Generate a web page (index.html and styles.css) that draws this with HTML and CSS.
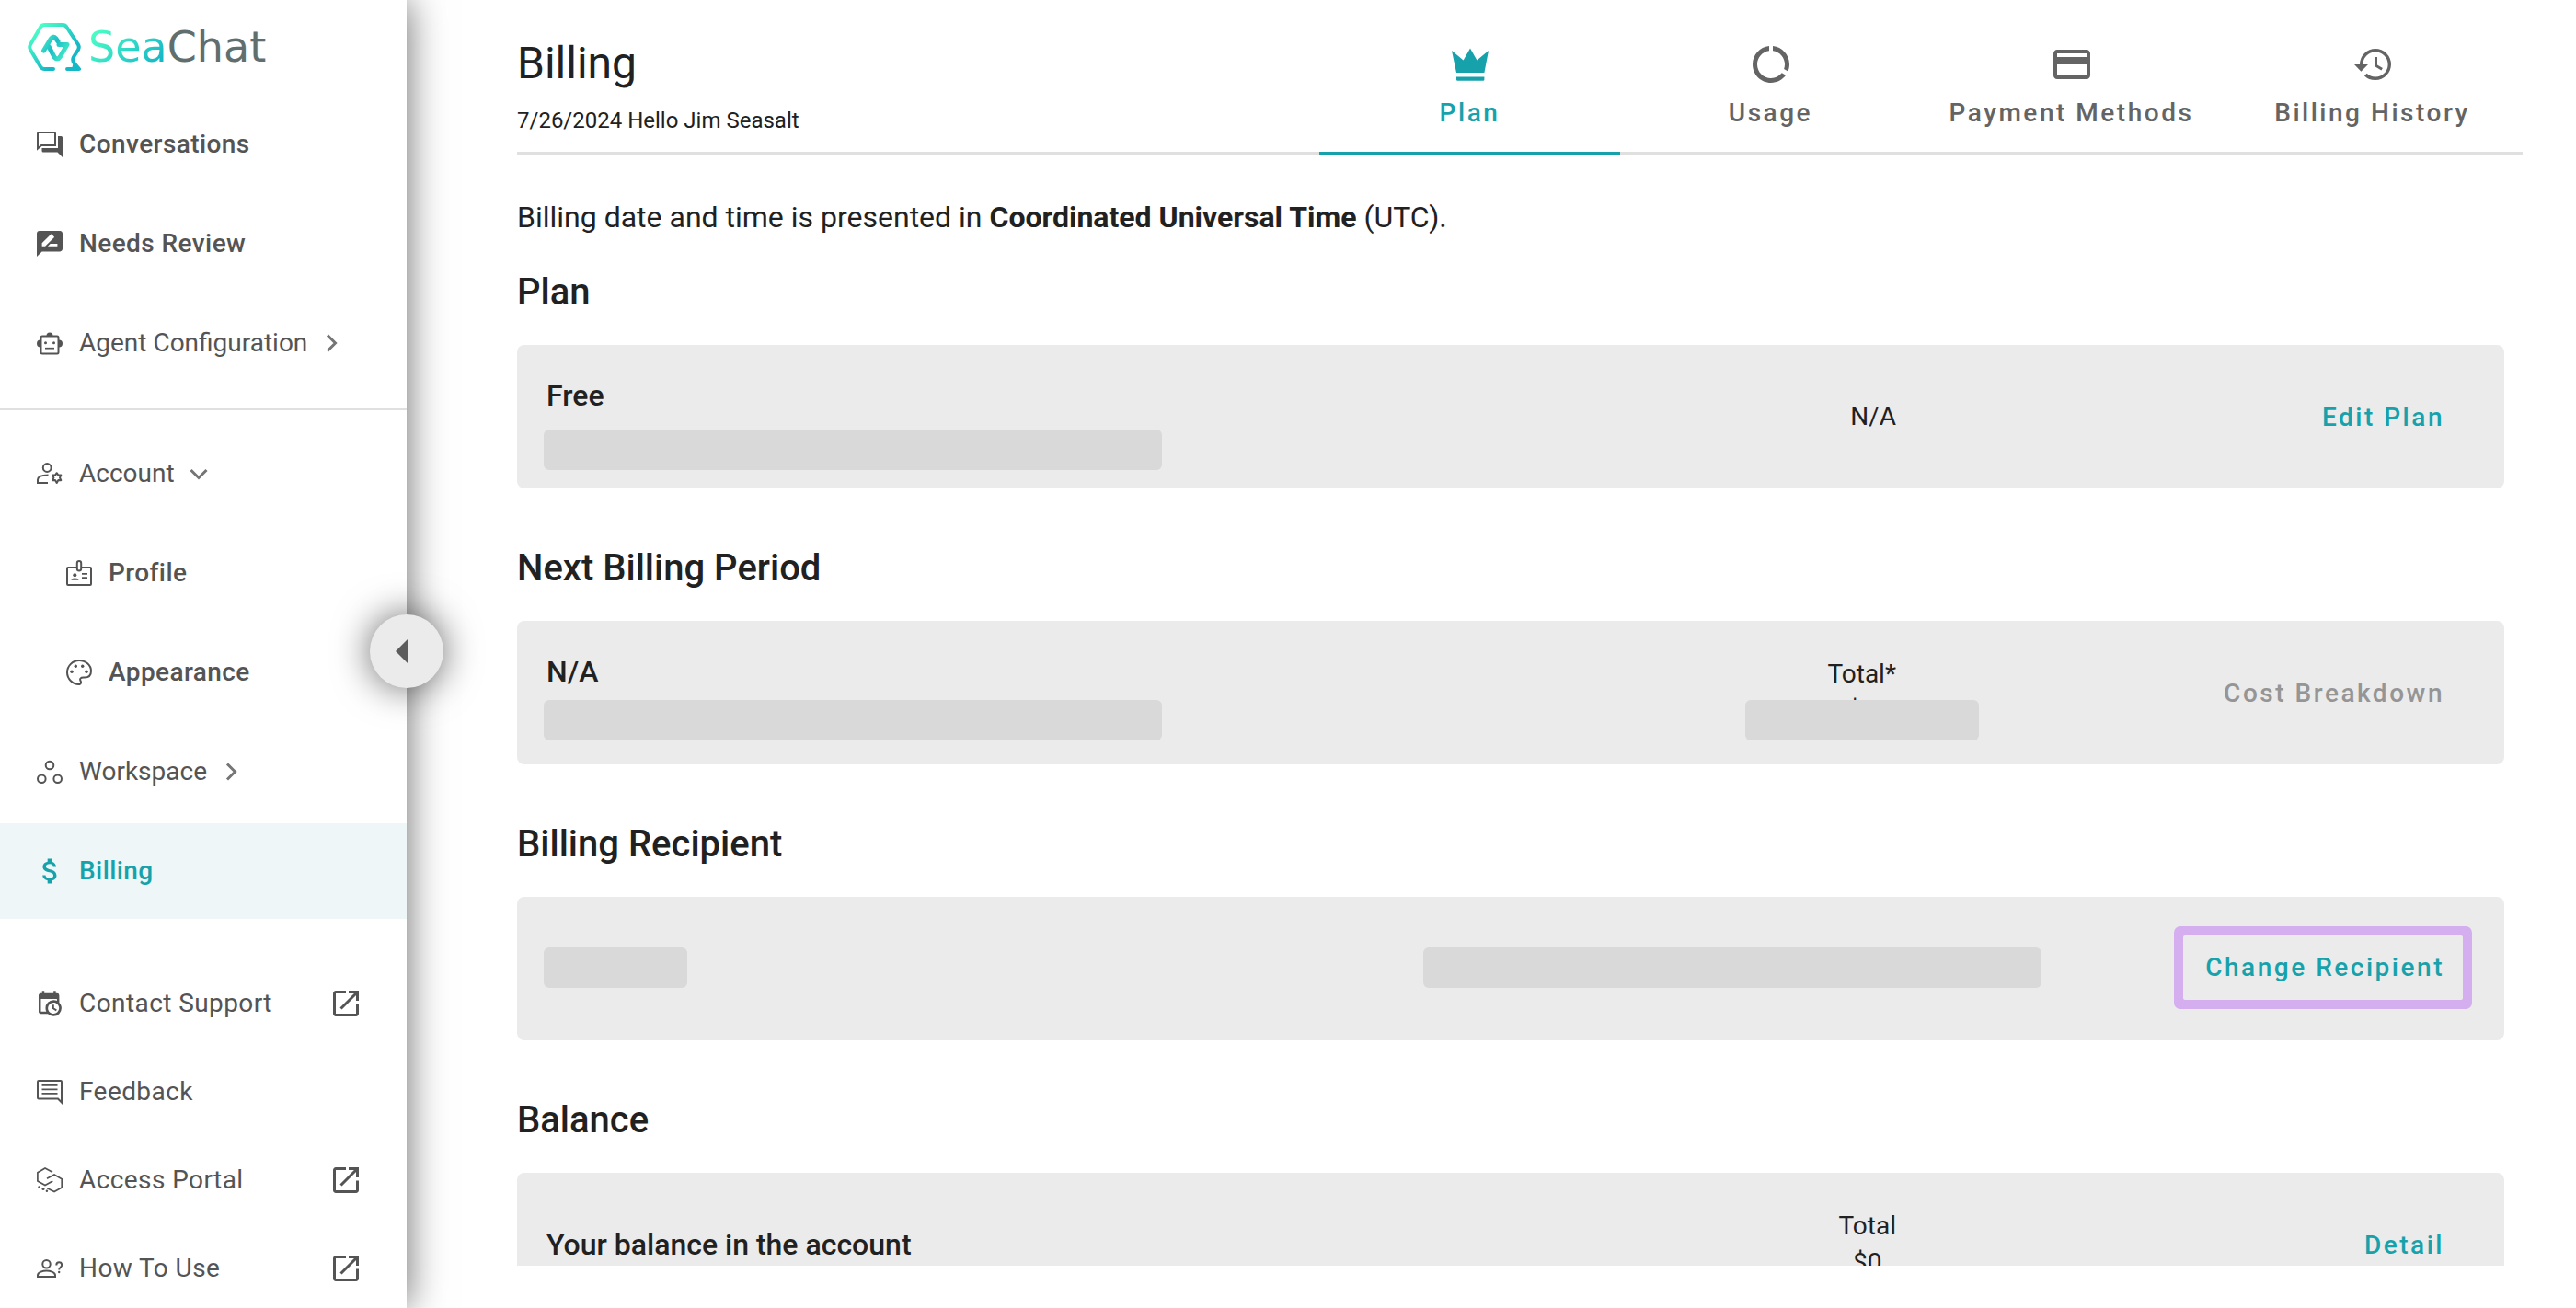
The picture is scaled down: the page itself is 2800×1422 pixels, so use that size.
FILE: index.html
```html
<!DOCTYPE html>
<html lang="en">
<head>
<meta charset="utf-8">
<title>Billing - SeaChat</title>
<meta name="viewport" content="width=device-width, initial-scale=1">
<link rel="stylesheet" href="styles.css">
</head>
<body>
<div class="app">
  <aside class="sidebar">
    <a class="logo" href="#">
      <svg class="logo-mark" viewBox="0 0 58 54" aria-hidden="true">
        <defs>
          <linearGradient id="markRing" x1="0" y1="0" x2="1" y2="1">
            <stop offset="0.1" stop-color="#4dffc6"/><stop offset="0.7" stop-color="#17b8c6"/>
          </linearGradient>
          <linearGradient id="markWave" x1="0" y1="0" x2="1" y2="0.6">
            <stop offset="0" stop-color="#43ecc6"/><stop offset="0.5" stop-color="#1bbcc6"/><stop offset="1" stop-color="#40e6c6"/>
          </linearGradient>
        </defs>
        <path d="M28 51H18.500Q15.500 51 14 48.500L3 30Q1.500 27 3 24.500L14 5.500Q15.500 3 18.500 3H38Q41 3 42.500 5.500L55 24.500Q56.500 27 55 30L50 38Q48 42 51 45L56 51H43" fill="none" stroke="url(#markRing)" stroke-width="4" stroke-linecap="round" stroke-linejoin="round"/>
        <path d="M48 51l2-8 7 9z" fill="#17b8c6"/>
        <path d="M17.500 31L25 18.500Q28 14.500 30.500 17.500L33 21M23 26.500L29 38Q32.500 42 35.500 37.500L43 24.500H34" fill="none" stroke="url(#markWave)" stroke-width="5" stroke-linecap="round" stroke-linejoin="round"/>
      </svg>
      <span class="logo-text"><span class="logo-sea">Sea</span>Chat</span>
    </a>

    <nav class="nav">
      <a class="nav-item nav-item--strong" href="#">
        <svg class="nav-icon" viewBox="0 0 28 28" aria-hidden="true"><path d="M2 1H19a1 1 0 0 1 1 1V15H5L1 18.600V2a1 1 0 0 1 1-1z" fill="none" stroke="currentColor" stroke-width="2"/><path d="M23 5h3.500a1.500 1.500 0 0 1 1.500 1.500V28L22.500 22.500H7a1.500 1.500 0 0 1-1.500-1.500V18H23z" fill="currentColor"/></svg>
        Conversations
      </a>
      <a class="nav-item nav-item--strong" href="#">
        <svg class="nav-icon" viewBox="2 2 20 20" aria-hidden="true"><path fill="currentColor" d="M20 2H4c-1.100 0-1.990.9-1.990 2L2 22l4-4h14c1.100 0 2-.9 2-2V4c0-1.100-.9-2-2-2zM6 14v-2.470l6.880-6.880c.2-.2.510-.2.710 0l1.770 1.770c.2.2.2.510 0 .710L8.470 14H6zm12 0h-7.500l2-2H18v2z"/></svg>
        Needs Review
      </a>
      <button class="nav-item" type="button" aria-expanded="false">
        <svg class="nav-icon" viewBox="0 0 28 28" aria-hidden="true"><rect x="4.500" y="6.500" width="19" height="19" rx="1.500" fill="none" stroke="currentColor" stroke-width="2"/><path fill="currentColor" d="M10.500 6q0-3.500 3.500-3.500T17.500 6zM4 10.500v8q-4 0-4-4t4-4zM24 10.500v8q4 0 4-4t-4-4z"/><circle cx="9.500" cy="13.700" r="1.500" fill="currentColor"/><circle cx="18.500" cy="13.700" r="1.500" fill="currentColor"/><path d="M9 19.700h10" stroke="currentColor" stroke-width="1.700"/></svg>
        Agent Configuration
        <svg class="chevron" viewBox="0 0 20 20" aria-hidden="true"><path d="M6 1.500L14.500 10 6 18.500"/></svg>
      </button>
      <hr class="nav-divider">
      <button class="nav-item" type="button" aria-expanded="true">
        <svg class="nav-icon" viewBox="0 0 28 28" aria-hidden="true"><g fill="none" stroke="currentColor" stroke-width="2"><circle cx="11.200" cy="7.500" r="4.400"/><path d="M12.500 15.500C6 15.500 1 17 1 20.500V24H12"/><path stroke-linejoin="round" d="M21.700 13.200l1.700 2.400 2.900-.2-1.300 2.900 1.300 2.900-2.900-.2-1.700 2.900-1.700-2.900-2.900.2 1.300-2.900-1.300-2.900 2.900.2z"/></g></svg>
        Account
        <svg class="chevron" viewBox="0 0 20 20" aria-hidden="true"><path d="M1.500 6L10 14.500 18.500 6"/></svg>
      </button>
      <a class="nav-item nav-item--strong nav-item--child" href="#">
        <svg class="nav-icon" viewBox="0 0 28 28" aria-hidden="true"><g fill="none" stroke="currentColor" stroke-width="2"><path d="M11 8H2a1 1 0 0 0-1 1V26a1 1 0 0 0 1 1H26a1 1 0 0 0 1-1V9a1 1 0 0 0-1-1H17"/><rect x="11.800" y="1" width="4.400" height="10.500" rx="2.200"/><path stroke-width="1.700" d="M17 14.800h6M17 19.200h6"/></g><circle cx="9.300" cy="16.300" r="2" fill="currentColor"/><path d="M5.500 21.800q0-2.300 3.800-2.300t4.200 2.300z" fill="currentColor"/></svg>
        Profile
      </a>
      <a class="nav-item nav-item--strong nav-item--child" href="#">
        <svg class="nav-icon" viewBox="0 0 28 28" aria-hidden="true"><path d="M14.500 27C7 27.200 1 21 1 14S7 1 14 1s13 5 13 11.500c0 5-3 7-7 7h-1.500c-3 0-4 1.500-3 3.500.8 1.500.9 3.500-1 4z" fill="none" stroke="currentColor" stroke-width="2"/><g fill="currentColor"><circle cx="10.300" cy="7.300" r="1.700"/><circle cx="17.700" cy="7.300" r="1.700"/><circle cx="6" cy="13.300" r="1.700"/><circle cx="22" cy="13.300" r="1.700"/></g></svg>
        Appearance
      </a>
      <button class="nav-item" type="button" aria-expanded="false">
        <svg class="nav-icon" viewBox="0 0 28 28" aria-hidden="true"><g fill="none" stroke="currentColor" stroke-width="2"><circle cx="14" cy="7" r="4.300"/><circle cx="5.300" cy="21.700" r="4.300"/><circle cx="22.700" cy="21.700" r="4.300"/></g></svg>
        Workspace
        <svg class="chevron" viewBox="0 0 20 20" aria-hidden="true"><path d="M6 1.500L14.500 10 6 18.500"/></svg>
      </button>
      <a class="nav-item nav-item--strong nav-item--active" href="#" aria-current="page">
        <svg class="nav-icon" viewBox="2.200 2.670 18.670 18.670" aria-hidden="true"><path fill="currentColor" d="M11.800 10.900c-2.270-.590-3-1.200-3-2.150 0-1.090 1.010-1.850 2.700-1.850 1.780 0 2.440.850 2.500 2.100h2.210c-.070-1.720-1.120-3.300-3.210-3.810V3h-3v2.160c-1.940.420-3.500 1.680-3.500 3.610 0 2.310 1.910 3.460 4.700 4.130 2.500.6 3 1.480 3 2.410 0 .690-.490 1.790-2.700 1.790-2.060 0-2.870-.920-2.980-2.100h-2.200c.120 2.190 1.760 3.420 3.680 3.830V21h3v-2.150c1.950-.370 3.500-1.500 3.500-3.550 0-2.840-2.430-3.810-4.700-4.400z"/></svg>
        Billing
      </a>
    </nav>

    <nav class="nav nav--support">
      <a class="nav-item nav-item--support" href="#">
        <svg class="nav-icon" viewBox="1.400 0.750 22.500 22.500" aria-hidden="true"><path fill="currentColor" d="M15,13H16.500V15.820L18.940,17.230L18.190,18.530L15,16.690V13M19,8H5V19H9.670C9.240,18.090 9,17.070 9,16A7,7 0 0,1 16,9C17.070,9 18.090,9.240 19,9.670V8M5,21C3.890,21 3,20.100 3,19V5C3,3.890 3.890,3 5,3H6V1H8V3H16V1H18V3H19A2,2 0 0,1 21,5V11.100C22.240,12.360 23,14.090 23,16A7,7 0 0,1 16,23C14.090,23 12.360,22.240 11.100,21H5M16,11.150A4.850,4.850 0 0,0 11.150,16C11.150,18.680 13.320,20.850 16,20.850A4.850,4.850 0 0,0 20.850,16C20.850,13.320 18.680,11.150 16,11.150Z"/></svg>
        Contact Support
        <svg class="external" viewBox="0 0 28 28" aria-hidden="true"><path d="M14 1.500H3A1.500 1.500 0 0 0 1.500 3V25A1.500 1.500 0 0 0 3 26.500H25A1.500 1.500 0 0 0 26.500 25V14.500M17 1.500H26.500V11M26.500 1.500L8.500 19.500"/></svg>
      </a>
      <a class="nav-item nav-item--support" href="#">
        <svg class="nav-icon" viewBox="0 0 28 28" aria-hidden="true"><g fill="none" stroke="currentColor"><path stroke-width="2" d="M2 2H26a1 1 0 0 1 1 1V25.500L23 21.500H2a1 1 0 0 1-1-1V3a1 1 0 0 1 1-1z"/><path stroke-width="1.800" d="M5.500 6.800h17M5.500 11.300h17M5.500 15.800h17"/></g></svg>
        Feedback
      </a>
      <a class="nav-item nav-item--support" href="#">
        <svg class="nav-icon" viewBox="0 0 28 28" aria-hidden="true"><path d="M17 5.300L9 1 .9 5.700V15L9 19.600 17.300 15M11 12.200L19 8l8.200 4.700V22L19 26.500 11.300 22.700" fill="none" stroke="currentColor" stroke-width="1.700"/><g fill="currentColor"><circle cx="2.500" cy="21.500" r="1.200"/><circle cx="7" cy="23.500" r="1.500"/><circle cx="10.900" cy="25.700" r="1.200"/></g></svg>
        Access Portal
        <svg class="external" viewBox="0 0 28 28" aria-hidden="true"><path d="M14 1.500H3A1.500 1.500 0 0 0 1.500 3V25A1.500 1.500 0 0 0 3 26.500H25A1.500 1.500 0 0 0 26.500 25V14.500M17 1.500H26.500V11M26.500 1.500L8.500 19.500"/></svg>
      </a>
      <a class="nav-item nav-item--support" href="#">
        <svg class="nav-icon" viewBox="0 0 28 28" aria-hidden="true"><g fill="none" stroke="currentColor" stroke-width="2"><circle cx="10.500" cy="9.300" r="4.200"/><path d="M1 23V21.500c0-3.500 6-5 9.500-5s9.500 1.500 9.500 5V23z"/><path d="M21.300 10.500c0-2 1.200-3.200 3-3.200s2.900 1.200 2.900 2.900c0 2.500-3 2.500-3 5.300"/></g><circle cx="24.200" cy="18" r="1.200" fill="currentColor"/></svg>
        How To Use
        <svg class="external" viewBox="0 0 28 28" aria-hidden="true"><path d="M14 1.500H3A1.500 1.500 0 0 0 1.500 3V25A1.500 1.500 0 0 0 3 26.500H25A1.500 1.500 0 0 0 26.500 25V14.500M17 1.500H26.500V11M26.500 1.500L8.500 19.500"/></svg>
      </a>
    </nav>

    <button class="collapse" type="button" aria-label="Collapse sidebar">
      <svg viewBox="0 0 14 28" aria-hidden="true"><path d="M14 0V28L0 14z" fill="currentColor"/></svg>
    </button>
  </aside>

  <main class="main">
    <header class="page-head">
      <div class="page-title">
        <h1>Billing</h1>
        <p>7/26/2024 Hello Jim Seasalt</p>
      </div>
      <div class="tabs" role="tablist">
        <button class="tab tab--active" type="button" role="tab" aria-selected="true">
          <svg viewBox="0 0 24 24" aria-hidden="true"><path fill="currentColor" d="M4.500 16.500L2 4.500L8.300 9.800L12 3.300L15.700 9.800L22 4.500L19.700 16.500zM4.500 18.700H19.700V20.200Q19.700 20.900 19 20.900H5.200Q4.500 20.900 4.500 20.200z"/></svg>
          Plan
        </button>
        <button class="tab" type="button" role="tab" aria-selected="false">
          <svg viewBox="0 0 24 24" aria-hidden="true"><path fill="currentColor" d="M13 2.050v2.530c3.700.490 6.500 3.590 6.500 7.420 0 .9-.150 1.750-.450 2.540l2.150 1.270c.510-1.180.8-2.450.8-3.810 0-5.180-3.950-9.450-9-9.950zM12 19.500c-4.140 0-7.500-3.360-7.500-7.500 0-3.830 2.810-6.930 6.500-7.420V2.050c-5.060.5-9 4.760-9 9.950 0 5.520 4.470 10 9.990 10 3.310 0 6.240-1.610 8.060-4.090l-2.170-1.270C16.480 18.380 14.380 19.500 12 19.500z"/></svg>
          Usage
        </button>
        <button class="tab" type="button" role="tab" aria-selected="false">
          <svg viewBox="0 0 24 24" aria-hidden="true"><path fill="currentColor" d="M20 4H4c-1.110 0-1.990.890-1.990 2L2 18c0 1.110.890 2 2 2h16c1.110 0 2-.890 2-2V6c0-1.110-.890-2-2-2zm0 14H4v-6h16v6zm0-10H4V6h16v2z"/></svg>
          Payment Methods
        </button>
        <button class="tab" type="button" role="tab" aria-selected="false">
          <svg viewBox="0 0 24 24" aria-hidden="true"><path fill="currentColor" d="M14.500 8H13v5l3.700 2.200.750-1.250-2.950-1.750V8M13.500 3.500A8.500 8.500 0 0 0 5 12H2l3.700 3.900L9.500 12H6.700a6.800 6.800 0 0 1 6.800-6.800 6.800 6.800 0 0 1 6.800 6.800 6.800 6.800 0 0 1-6.800 6.800c-1.870 0-3.400-.7-4.700-1.900l-1.300 1.300A8.500 8.500 0 0 0 13.500 20.500a8.500 8.500 0 0 0 8.500-8.500 8.500 8.500 0 0 0-8.500-8.500"/></svg>
          Billing History
        </button>
      </div>
    </header>

    <div class="content">
      <p class="notice">Billing date and time is presented in <strong>Coordinated Universal Time</strong> (UTC).</p>

      <section class="section">
        <h2>Plan</h2>
        <div class="card">
          <div class="lead lead--roomy">
            <h3>Free</h3>
            <span class="mask mask--wide"></span>
          </div>
          <div class="amount"><span>N/A</span></div>
          <button class="action" type="button">Edit Plan</button>
        </div>
      </section>

      <section class="section">
        <h2>Next Billing Period</h2>
        <div class="card">
          <div class="lead">
            <h3>N/A</h3>
            <span class="mask mask--wide"></span>
          </div>
          <div class="amount amount--masked">
            <span>Total*<br>$0</span>
            <span class="mask mask--amount"></span>
          </div>
          <button class="action" type="button" disabled>Cost Breakdown</button>
        </div>
      </section>

      <section class="section">
        <h2>Billing Recipient</h2>
        <div class="card card--recipient">
          <span class="mask mask--name"></span>
          <span class="mask mask--wide"></span>
          <button class="action action--highlight" type="button">Change Recipient</button>
        </div>
      </section>

      <section class="section">
        <h2>Balance</h2>
        <div class="card">
          <div class="lead lead--single">
            <h3>Your balance in the account</h3>
          </div>
          <div class="amount"><span>Total<br>$0</span></div>
          <button class="action" type="button">Detail</button>
        </div>
      </section>
    </div>
  </main>
</div>
</body>
</html>
```
FILE: styles.css
```css
:root {
  --teal: #17a2ab;
  --ink: #212121;
  --nav-ink: #545454;
  --tab-ink: #646464;
  --card: #ebebeb;
  --mask: #d9d9d9;
  --line: #e0e0e0;
}

* { box-sizing: border-box; }

body {
  margin: 0;
  background: #fff;
  color: var(--ink);
  font-family: Roboto, "Liberation Sans", sans-serif;
  font-size: 28px;
}

h1, h2, h3, p { margin: 0; font-weight: 400; }

button {
  border: 0;
  background: none;
  color: inherit;
  font: inherit;
  cursor: pointer;
}

a { color: inherit; text-decoration: none; }

.app {
  display: flex;
  height: 100vh;
  overflow: hidden;
}

/* Sidebar */
.sidebar {
  position: relative;
  z-index: 1;
  display: flex;
  flex: 0 0 442px;
  flex-direction: column;
  background: #fff;
  color: var(--nav-ink);
  box-shadow: 0 0 40px rgba(0, 0, 0, 0.6);
}

.logo {
  display: flex;
  flex: none;
  align-items: center;
  gap: 8px;
  height: 105px;
  padding: 0 30px 4px;
}

.logo-mark { width: 58px; height: 54px; }

.logo-text {
  color: #616e6e;
  font-family: "DejaVu Sans", sans-serif;
  font-size: 46px;
  line-height: 52px;
}

.logo-sea {
  background: linear-gradient(135deg, #4dffc6 10%, #17b8c6 85%);
  background-clip: text;
  color: transparent;
}

.nav { display: flex; flex: none; flex-direction: column; gap: 4px; }

.nav-item {
  display: flex;
  align-items: center;
  gap: 18px;
  width: 100%;
  height: 104px;
  padding: 0 52px 0 40px;
  font-size: 28px;
  line-height: 36px;
}

.nav-item--strong { font-weight: 500; letter-spacing: 0.015em; }
.nav-item--child { padding-left: 72px; }
.nav-item--active { background: #eef6f8; color: var(--teal); }
.nav-item--support { height: 96px; letter-spacing: 0.015em; }

.nav--support { gap: 0; margin-top: 44px; }

.nav-icon { flex: none; width: 28px; height: 28px; }

.chevron { flex: none; width: 20px; height: 20px; margin-left: -2px; }

.chevron path {
  fill: none;
  stroke: #757575;
  stroke-width: 3;
}

.external { flex: none; width: 28px; height: 28px; margin-left: auto; }

.external path {
  fill: none;
  stroke: currentColor;
  stroke-width: 3;
}

.nav-divider {
  width: 100%;
  height: 2px;
  margin: 15px 0 13px;
  border: 0;
  background: var(--line);
}

.collapse {
  position: absolute;
  top: 50%;
  right: -40px;
  display: flex;
  align-items: center;
  justify-content: center;
  width: 80px;
  height: 80px;
  margin-top: -43px;
  padding: 0 10px 0 0;
  border-radius: 50%;
  background: var(--card);
  color: #5c5c5c;
  box-shadow: 0 0 40px rgba(0, 0, 0, 0.6);
}

.collapse svg { width: 14px; height: 28px; }

/* Main column */
.main {
  display: flex;
  flex: 1;
  flex-direction: column;
  min-width: 0;
  padding: 0 58px 46px 120px;
}

.page-head {
  display: flex;
  flex: none;
  height: 169px;
  box-shadow: inset 0 -4px var(--line);
}

.page-title { flex: 0 0 40%; padding-top: 37px; }

.page-title h1 { font-size: 48px; line-height: 64px; }
.page-title p { padding-top: 14px; font-size: 24px; line-height: 32px; }

.tabs { display: flex; flex: 1; }

.tab {
  display: flex;
  flex: 1;
  flex-direction: column;
  align-items: center;
  gap: 13px;
  padding: 46px 0 0;
  border-bottom: 4px solid transparent;
  color: var(--tab-ink);
  font-size: 28px;
  font-weight: 500;
  line-height: 32px;
  letter-spacing: 0.09em;
  white-space: nowrap;
}

.tab svg { width: 48px; height: 48px; }

.tab--active { border-bottom-color: var(--teal); color: var(--teal); }

.content {
  flex: 1;
  min-height: 0;
  padding: 47px 20px 0 0;
  overflow: hidden;
}

.notice { font-size: 32px; line-height: 40px; }
.notice strong { font-weight: 700; }

.section { padding-top: 37px; }
.section + .section { padding-top: 62px; }

.section h2 { font-size: 40px; font-weight: 500; line-height: 50px; }

.card {
  display: grid;
  grid-template-columns: minmax(0, 1fr) auto 616px;
  align-items: center;
  height: 156px;
  margin-top: 32px;
  padding: 0 45px 0 29px;
  border-radius: 8px;
  background: var(--card);
}

.card h3 {
  padding-left: 3px;
  font-size: 32px;
  font-weight: 500;
  line-height: 40px;
}

.lead {
  display: flex;
  flex-direction: column;
  gap: 11px;
  align-self: start;
  padding-top: 35px;
}

.lead--roomy { gap: 17px; }
.lead--single { align-self: center; padding-top: 0; }

.mask {
  display: block;
  height: 44px;
  border-radius: 6px;
  background: var(--mask);
}

.mask--wide { width: 672px; }
.mask--name { width: 156px; }

.amount {
  font-size: 28px;
  line-height: 40px;
  text-align: center;
}

.amount--masked { position: relative; }

.mask--amount {
  position: absolute;
  top: 48px;
  left: 50%;
  width: 254px;
  margin-left: -127px;
}

.card--recipient {
  grid-template-columns: minmax(0, 1fr) auto 458px;
  padding-bottom: 3px;
}

.action {
  justify-self: end;
  height: 70px;
  padding: 0 20px 0 24px;
  color: var(--teal);
  font-size: 28px;
  font-weight: 500;
  letter-spacing: 0.09em;
}

.action:disabled { color: #959595; }

.action--highlight {
  border-radius: 2px;
  box-shadow: 0 0 0 10px #d4aeee;
}
```
